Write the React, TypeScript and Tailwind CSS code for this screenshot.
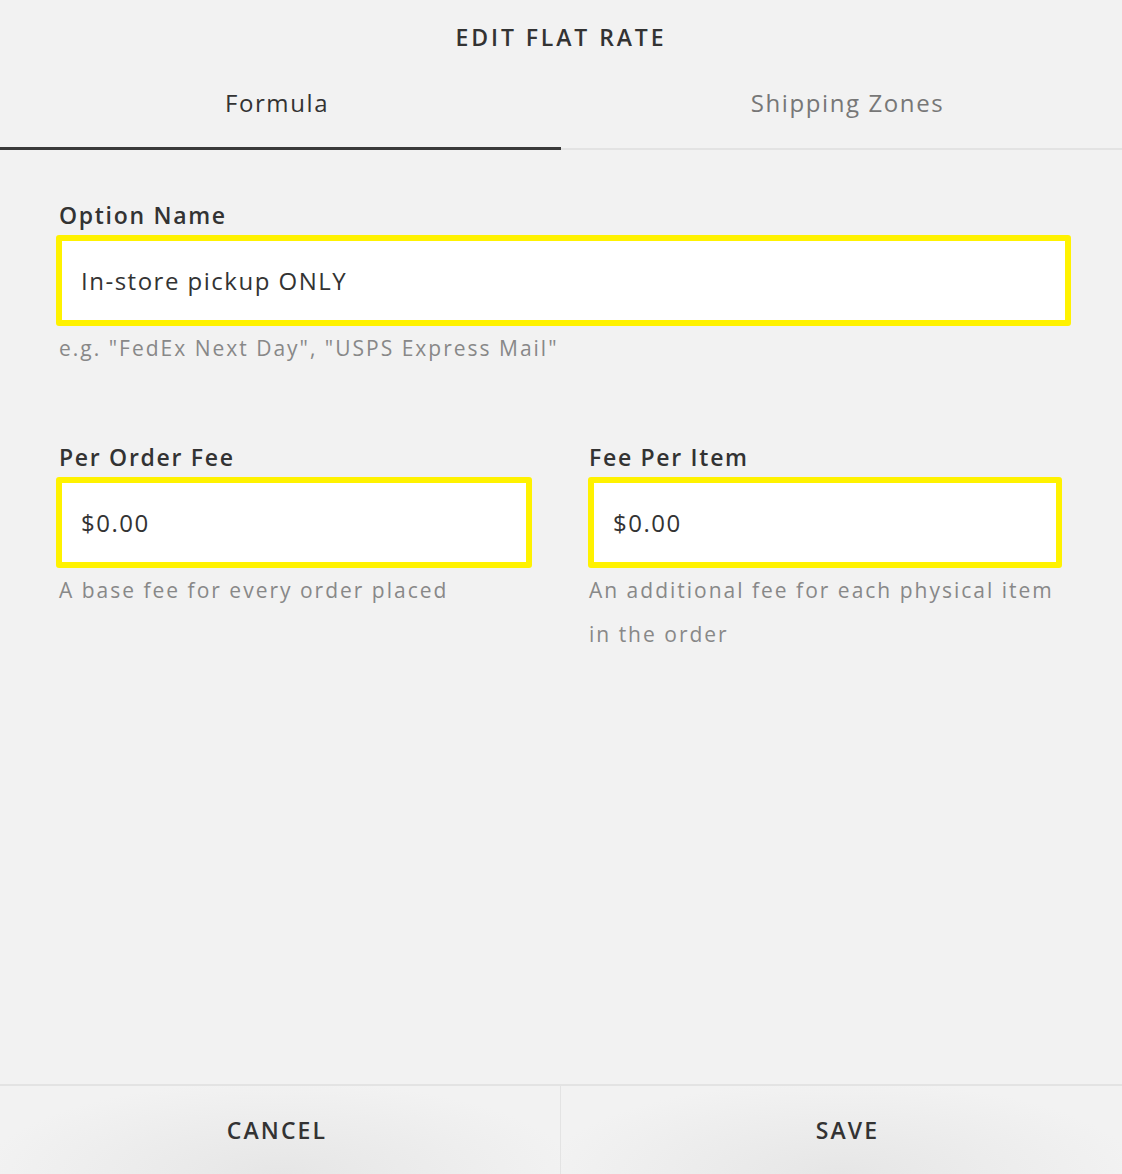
import { useState } from 'react';

const font = { fontFamily: '"Open Sans", Lato, sans-serif' };

const Field = ({
  label,
  value,
  help,
  onChange,
  tight,
}: {
  label: string;
  value: string;
  help: React.ReactNode;
  onChange: (v: string) => void;
  tight?: boolean;
}) => (
  <div className="flex flex-col">
    <label
      className={`${tight ? 'pl-[1px]' : 'pl-[3px]'} mb-[8px] text-[23px] leading-[24px] font-semibold tracking-[1.7px] text-[#333]`}
    >
      {label}
    </label>
    <input
      value={value}
      onChange={(e) => onChange(e.target.value)}
      className="h-[91px] w-full bg-white border-[6px] border-[#fff200] rounded-[3px] pl-[19px] text-[24px] tracking-[1.5px] text-[#333] outline-none"
    />
    <p className={`${tight ? 'pl-[1px]' : 'pl-[3px]'} text-[21px] leading-[44px] text-[#888] tracking-[2px]`}>{help}</p>
  </div>
);

const App = () => {
  const [tab, setTab] = useState('formula');
  const [name, setName] = useState('In-store pickup ONLY');
  const [orderFee, setOrderFee] = useState('$0.00');
  const [itemFee, setItemFee] = useState('$0.00');

  return (
    <div className="h-[1174px] bg-[#f2f2f2] flex flex-col" style={font}>
      <div className="h-[74px] flex items-center justify-center">
        <h1 className="text-[23px] font-semibold tracking-[2.9px] text-[#333]">EDIT FLAT RATE</h1>
      </div>

      <div className="flex">
        <button
          onClick={() => setTab('formula')}
          className={`w-1/2 shrink-0 h-[76px] pt-[17px] pr-[7px] flex justify-center items-start text-[24px] leading-[24px] tracking-[1.6px] ${
            tab === 'formula' ? 'text-[#333] border-b-[3px] border-[#3a3a3a]' : 'text-[#777] border-b-2 border-[#e3e3e3]'
          }`}
        >
          Formula
        </button>
        <button
          onClick={() => setTab('zones')}
          className={`w-1/2 shrink-0 h-[76px] pt-[17px] pl-[12px] flex justify-center items-start text-[24px] leading-[24px] tracking-[1.6px] ${
            tab === 'zones' ? 'text-[#333] border-b-[3px] border-[#3a3a3a]' : 'text-[#777] border-b-2 border-[#e3e3e3]'
          }`}
        >
          Shipping Zones
        </button>
      </div>

      <div className="flex-1 pl-[56px] pr-[51px] pt-[53px]">
        <Field
          label="Option Name"
          value={name}
          onChange={setName}
          help={'e.g. "FedEx Next Day", "USPS Express Mail"'}
        />

        <div className="mt-[75px] grid grid-cols-[476px_474px] gap-x-[56px]">
          <Field label="Per Order Fee" value={orderFee} onChange={setOrderFee} help="A base fee for every order placed" />
          <Field
            tight
            label="Fee Per Item"
            value={itemFee}
            onChange={setItemFee}
            help="An additional fee for each physical item in the order"
          />
        </div>
      </div>

      <div className="flex border-t-2 border-[#e3e3e3]">
        <button className="w-1/2 shrink-0 h-[88px] pr-[6px] flex items-center justify-center text-[23px] font-semibold tracking-[2.1px] text-[#333] border-r border-[#e3e3e3] bg-[radial-gradient(ellipse_at_bottom,#e6e6e6_0%,#f2f2f2_75%)]">
          CANCEL
        </button>
        <button className="w-1/2 shrink-0 h-[88px] pl-[12px] flex items-center justify-center text-[23px] font-semibold tracking-[2.1px] text-[#333] bg-[radial-gradient(ellipse_at_bottom,#e6e6e6_0%,#f2f2f2_75%)]">
          SAVE
        </button>
      </div>
    </div>
  );
};

export default App;
